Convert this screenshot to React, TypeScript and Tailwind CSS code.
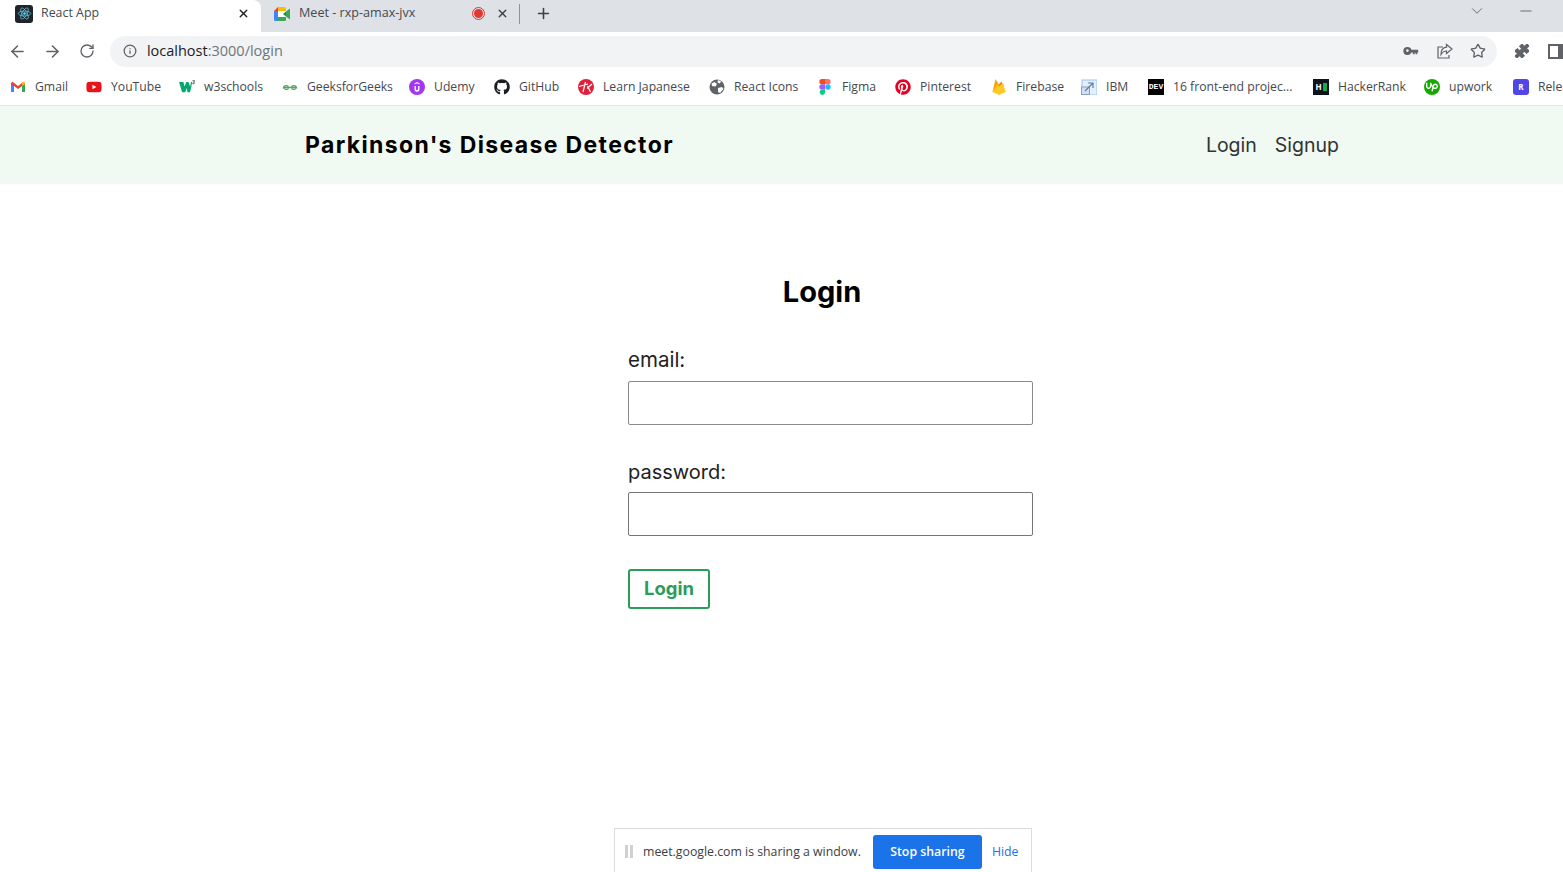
import React from 'react';
import { ArrowLeft, ArrowRight, RotateCw, Info, X, Plus, ChevronDown, Minus, Star, Puzzle } from 'lucide-react';
import { FaGithub, FaPinterest, FaYoutube } from 'react-icons/fa';
import { SiUpwork } from 'react-icons/si';

const GmailIcon = () => (
  <svg viewBox="0 0 16 16" className="w-4 h-4">
    <path d="M1 4v9h3V7l4 3 4-3v6h3V4l-1.500-1.200L8 7 2.500 2.800z" fill="#ea4335" />
    <path d="M1 5v8h3V7z" fill="#4285f4" />
    <path d="M15 5v8h-3V7z" fill="#34a853" />
    <path d="M12 7l3-2V3.500l-1.500-.7L12 4z" fill="#fbbc04" />
  </svg>
);

const W3Icon = () => (
  <svg viewBox="0 0 18 16" className="w-[18px] h-4">
    <path d="M0 2.500h5l1.200 5 2-5h2.400l2 5 .9-5h1.500L12.500 14h-3L8.800 9 7 14H3.500z" fill="#04aa6d" />
    <path d="M15.200 1h2.200v.7l-.9.8c.8.200 1 1.100.5 1.600-.4.400-1.300.400-1.900.100" fill="none" stroke="#111" strokeWidth="0.800" />
  </svg>
);

const GfgIcon = () => (
  <svg viewBox="0 0 16 16" className="w-4 h-4" fill="none" stroke="#5aa469" strokeWidth="1.300">
    <path d="M8 8.500H1.500c.4-2 3.800-2.500 5 -.8M8 8.500h6.500c-.4-2-3.800-2.500-5-.8" />
    <path d="M1.600 8.500c.3 2 3.600 2.600 5 .9M14.400 8.500c-.3 2-3.600 2.600-5 .9" />
  </svg>
);

const UdemyIcon = () => (
  <svg viewBox="0 0 16 16" className="w-4 h-4">
    <circle cx="8" cy="8" r="8" fill="#a435f0" />
    <path d="M5.500 7v3.200a2.500 2.500 0 0 0 5 0V7h-1.400v3.100a1.100 1.100 0 0 1-2.200 0V7z" fill="#fff" />
    <path d="M8 3l2.500 1.500v1L8 4.200 5.500 5.500v-1z" fill="#fff" />
  </svg>
);

const JapaneseIcon = () => (
  <svg viewBox="0 0 16 16" className="w-4 h-4">
    <circle cx="8" cy="8" r="8" fill="#e0203a" />
    <path d="M1 7.500l9-2.500M7.500 3L5 13M9 9.500l5-4.500M9.500 7l3 6" stroke="#fff" strokeWidth="1.200" fill="none" />
  </svg>
);

const GlobeIcon = () => (
  <svg viewBox="0 0 16 16" className="w-4 h-4">
    <circle cx="8" cy="8" r="7.500" fill="#5f6368" />
    <path d="M2.500 4.500l3-1.500 2.500 2-1.500 2.500-3.500-.5zM9 9l4-1 1.500 2-3.500 4-2-1zM9 1l3 1.200-1 2.300-2.500-1z" fill="#fff" />
  </svg>
);

const FigmaIcon = () => (
  <svg viewBox="0 0 12 16" className="w-3 h-4">
    <path d="M3 0h3v5.300H3A2.650 2.650 0 0 1 3 0z" fill="#f24e1e" />
    <path d="M6 0h3a2.650 2.650 0 0 1 0 5.300H6z" fill="#ff7262" />
    <path d="M3 5.300h3v5.300H3a2.650 2.650 0 0 1 0-5.300z" fill="#a259ff" />
    <circle cx="9" cy="8" r="2.650" fill="#1abcfe" />
    <path d="M3 10.600h3v2.700A2.650 2.650 0 1 1 3 10.600z" fill="#0acf83" />
  </svg>
);

const FirebaseIcon = () => (
  <svg viewBox="0 0 16 16" className="w-4 h-4">
    <path d="M1.500 13L4.500 0l3.500 6z" fill="#ffa000" />
    <path d="M1.500 13L10.500 2.500 14.500 13z" fill="#f57c00" />
    <path d="M1.500 13L8 16l6.500-3-2.300-9.500L8 7.500 6.500 5z" fill="#ffca28" />
  </svg>
);

const BrokenImageIcon = () => (
  <svg viewBox="0 0 16 16" className="w-4 h-4" fill="none">
    <rect x="1" y="1" width="15" height="15" fill="#e3effb" stroke="#9cc3ea" />
    <rect x="0.500" y="8" width="8" height="7.500" fill="#cfe0f3" stroke="#8aa0c0" />
    <path d="M4 12l8-8M7 4h5v5" stroke="#5f7da8" strokeWidth="1.200" />
  </svg>
);

type Bookmark = { label: string; width: string; icon: React.ReactNode };

const bookmarks: Bookmark[] = [
  { label: 'Gmail', width: 'w-[76px]', icon: <GmailIcon /> },
  { label: 'YouTube', width: 'w-[93px]', icon: <FaYoutube className="w-[18px] h-4 text-[#e8121a]" /> },
  { label: 'w3schools', width: 'w-[103px]', icon: <W3Icon /> },
  { label: 'GeeksforGeeks', width: 'w-[127px]', icon: <GfgIcon /> },
  { label: 'Udemy', width: 'w-[85px]', icon: <UdemyIcon /> },
  { label: 'GitHub', width: 'w-[84px]', icon: <FaGithub className="w-4 h-4 text-[#1b1f23]" /> },
  { label: 'Learn Japanese', width: 'w-[131px]', icon: <JapaneseIcon /> },
  { label: 'React Icons', width: 'w-[108px]', icon: <GlobeIcon /> },
  { label: 'Figma', width: 'w-[78px]', icon: <FigmaIcon /> },
  { label: 'Pinterest', width: 'w-[96px]', icon: <FaPinterest className="w-4 h-4 text-[#e60023]" /> },
  { label: 'Firebase', width: 'w-[90px]', icon: <FirebaseIcon /> },
  { label: 'IBM', width: 'w-[67px]', icon: <BrokenImageIcon /> },
  {
    label: '16 front-end projec...',
    width: 'w-[165px]',
    icon: <span className="w-[17px] h-4 bg-black text-white text-[8px] font-bold flex items-center justify-center font-['Liberation_Mono',monospace]">DEV</span>,
  },
  {
    label: 'HackerRank',
    width: 'w-[111px]',
    icon: <span className="w-[17px] h-4 bg-[#0e141e] text-white text-[8px] font-bold flex items-center justify-center gap-px">H<span className="w-1 h-2 bg-[#1ba94c]" /></span>,
  },
  {
    label: 'upwork',
    width: 'w-[89px]',
    icon: <span className="w-4 h-4 rounded-full bg-[#14a800] flex items-center justify-center text-white"><SiUpwork className="w-3 h-3" /></span>,
  },
  {
    label: 'Release',
    width: 'w-[60px]',
    icon: <span className="w-4 h-4 rounded-[3px] bg-[#4f46e5] text-white text-[8px] font-bold flex items-center justify-center">R</span>,
  },
];

const App: React.FC = () => {
  return (
    <div className="relative h-[872px] w-full overflow-hidden bg-white font-['Inter',sans-serif]">
      {/* browser tabs */}
      <div className="flex h-8 items-stretch bg-[#dee1e6] font-['Open_Sans',sans-serif] text-[12.400px] text-[#45494e]">
        <div className="flex w-[261px] items-center rounded-tr-lg bg-white pb-[5px] pl-[15px] pr-[11px]">
          <span className="flex h-[18px] w-[18px] items-center justify-center rounded-[3px] bg-[#20232a]">
            <svg viewBox="0 0 18 18" className="h-[15px] w-[15px]" fill="none" stroke="#61dafb" strokeWidth="0.800">
              <ellipse cx="9" cy="9" rx="7.500" ry="3" />
              <ellipse cx="9" cy="9" rx="7.500" ry="3" transform="rotate(60 9 9)" />
              <ellipse cx="9" cy="9" rx="7.500" ry="3" transform="rotate(120 9 9)" />
              <circle cx="9" cy="9" r="1.300" fill="#61dafb" />
            </svg>
          </span>
          <span className="ml-2 flex-1">React App</span>
          <X className="h-[13px] w-[13px] text-[#202124]" strokeWidth={2.500} />
        </div>
        <div className="flex w-[259px] items-center pb-[5px] pl-[13px]">
          <svg viewBox="0 0 16 14" className="h-[14px] w-4">
            <path d="M0 4v8.500A1.500 1.500 0 0 0 1.500 14H4V4z" fill="#4285f4" />
            <path d="M4 0L0 4h4z" fill="#ea4335" />
            <path d="M4 0h6.500A1.500 1.500 0 0 1 12 1.500V4H4z" fill="#fbbc04" />
            <path d="M4 10h8v2.500a1.500 1.500 0 0 1-1.500 1.500H4z" fill="#34a853" />
            <path d="M12 4.500l4-3v11l-4-3z" fill="#34a853" />
            <path d="M4 4h8v6H4z" fill="#fff" />
            <path d="M9 7l3-2.500v5z" fill="#1e8e3e" />
          </svg>
          <span className="ml-[9px] flex-1 text-[12.600px]">Meet - rxp-amax-jvx</span>
          <span className="mr-[11px] flex h-[13px] w-[13px] items-center justify-center rounded-full border border-[#e0392f]">
            <span className="h-[9px] w-[9px] rounded-full bg-[#e0392f]" />
          </span>
          <X className="h-[13px] w-[13px] text-[#3c4043]" strokeWidth={2.500} />
          <span className="ml-[10px] h-5 w-px bg-[#8f9297]" />
        </div>
        <div className="flex items-center pb-[5px] pl-[15px]">
          <Plus className="h-[17px] w-[17px] text-[#3c4043]" strokeWidth={2.200} />
        </div>
        <div className="flex flex-1 items-start justify-end pr-[28px] pt-[2px] text-[#5f6368]">
          <ChevronDown className="h-[18px] w-[18px]" strokeWidth={1.200} />
          <Minus className="ml-[31px] h-[18px] w-[18px]" strokeWidth={1.200} />
        </div>
      </div>

      {/* address bar */}
      <div className="flex h-[38px] items-center bg-white pl-[8px] text-[#5f6368]">
        <ArrowLeft className="h-[19px] w-[19px]" strokeWidth={2} />
        <ArrowRight className="ml-[16px] h-[19px] w-[19px]" strokeWidth={2} />
        <RotateCw className="ml-[17px] h-4 w-4" strokeWidth={2} />
        <div className="ml-[15px] flex h-[31px] w-[1389px] items-center rounded-full bg-[#f1f3f4] pl-[13px] pr-[11px] font-['Open_Sans',sans-serif] text-[14.500px]">
          <Info className="h-[14px] w-[14px] text-[#5f6368]" strokeWidth={2.200} />
          <span className="ml-[10px] flex-1 text-[#70757a]"><span className="text-[#202124]">localhost</span>:3000/login</span>
          <svg viewBox="0 0 16 10" className="mr-[18px] h-[9px] w-4" fill="#5f6368">
            <path d="M4 0a4 4 0 1 1 0 9 4 4 0 0 1 0-9zm0 2.500a1.500 1.500 0 1 0 0 3 1.500 1.500 0 0 0 0-3zM7.500 3H16v3h-1v2h-2V6.500h-1V8h-2V6H7.500z" />
          </svg>
          <svg viewBox="0 0 16 16" className="mr-[17px] h-4 w-4" fill="none" stroke="#5f6368" strokeWidth="1.200">
            <path d="M6 4H1v11h11v-3" />
            <path d="M9.500 1.500L15 6l-5.500 4.500V8C7 8 5.500 9 4 11.500 4 7.500 6 4.500 9.500 4.200z" />
          </svg>
          <Star className="h-4 w-4" strokeWidth={2} />
        </div>
        <Puzzle className="ml-[17px] h-4 w-4 fill-[#5f6368]" strokeWidth={1.500} />
        <span className="ml-[18px] h-[15px] w-[15px] shrink-0 border-2 border-r-[5px] border-[#5f6368]" />
      </div>

      {/* bookmarks */}
      <div className="flex h-[36px] items-center overflow-hidden border-b border-[#e4e6e8] bg-white pb-[1px] pl-[10px] font-['Open_Sans',sans-serif] text-[12.200px] text-[#45494e]">
        {bookmarks.map((b) => (
          <div key={b.label} className={`flex shrink-0 items-center whitespace-nowrap ${b.width}`}>
            <span className="flex w-[16px] shrink-0 items-center justify-center">{b.icon}</span>
            <span className="ml-[9px]">{b.label}</span>
          </div>
        ))}
      </div>

      {/* navbar */}
      <nav className="flex h-[78px] items-center justify-between bg-[#f0f9f2] pl-[305px] pr-[224px]">
        <span className="text-[23px] font-bold tracking-[1.360px] text-black">Parkinson's Disease Detector</span>
        <div className="flex gap-[18px] pt-[2px] text-[19.500px] text-[#333]">
          <span>Login</span>
          <span>Signup</span>
        </div>
      </nav>

      {/* form */}
      <main className="ml-[612px] w-[420px] pt-[88px]">
        <h1 className="h-[40px] text-center text-[29px] font-bold leading-[40px] text-black">Login</h1>
        <form className="pl-4 pt-[33px]">
          <label className="block text-[20.500px] leading-[30px] text-[#222]">email:</label>
          <input className="mt-[6px] block h-[44px] w-[405px] rounded-[2px] border border-[#8a8a8a]" />
          <label className="mt-[31px] block text-[20px] leading-[32px] text-[#222]">password:</label>
          <input className="mt-[4px] block h-[44px] w-[405px] rounded-[2px] border border-[#767676]" />
          <button type="button" className="mt-[33px] flex h-[40px] w-[82px] items-center justify-center rounded-[3px] border-2 border-[#2a9d58] text-[18.500px] font-bold text-[#2a9d58]">
            Login
          </button>
        </form>
      </main>

      {/* screen share notice */}
      <div className="absolute bottom-0 left-[614px] flex h-[44px] w-[418px] items-center border border-b-0 border-[#dadce0] bg-white pl-[10px] pt-[2px] font-['Open_Sans',sans-serif] text-[12.300px] text-[#3c4043]">
        <span className="h-[13px] w-[8px] border-x-[3px] border-[#d0d0d0]" />
        <span className="ml-[10px] pt-[2px]">meet.google.com is sharing a window.</span>
        <button type="button" className="ml-[12px] h-[34px] w-[109px] rounded-[3px] bg-[#1a73e8] pt-[1px] font-semibold text-white">Stop sharing</button>
        <span className="ml-[10px] pt-[2px] text-[#1a73e8]">Hide</span>
      </div>
    </div>
  );
};

export default App;
